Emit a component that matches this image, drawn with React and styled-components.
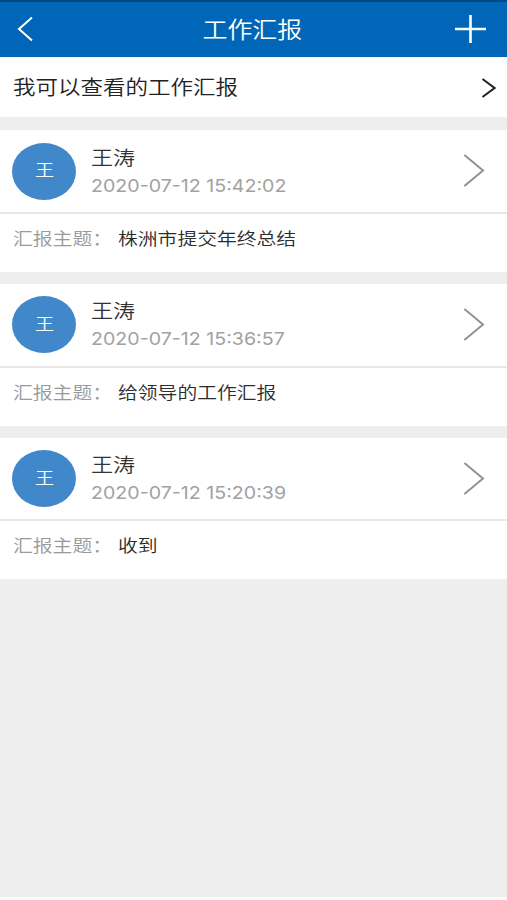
import styled, { createGlobalStyle } from "styled-components";

const GlobalStyle = createGlobalStyle`
    * {
        box-sizing: border-box;
    }

    body {
        margin: 0;
        background: #eeeeee;
        font-family: Inter, "Noto Sans CJK SC", sans-serif;
        font-weight: 350;
    }
`

const Page = styled.div`
    display: flex;
    flex-direction: column;
    height: 900px;
    overflow: hidden;
    background: #eeeeee;
    border-bottom: 3px solid #fafafa;
`

const Header = styled.header`
    display: grid;
    grid-template-columns: 60px 1fr 60px;
    align-items: center;
    flex-shrink: 0;
    height: 57.3px;
    padding: 0 21px 1px 17px;
    border-top: 2px solid #004884;
    background: #0166b7;
    color: #fff;
`

// glyphs run slightly wider than tall across the whole screen
const Text = styled.span`
    display: inline-block;
    flex-shrink: 0;
    font-size: ${props => props.$size}px;
    line-height: ${props => props.$line || 24}px;
    color: ${props => props.$color};
    white-space: nowrap;
    transform: scaleX(${props => props.$stretch || 1.125});
    transform-origin: ${props => props.$origin || "left"} center;
`

const Time = styled(Text)`
    font-weight: 400;
`

const Title = styled.h1`
    display: flex;
    justify-content: center;
    margin: 0;
    padding: 1px 0 0 2px;
    font-weight: 350;
`

const Icon = styled.svg`
    display: block;
    flex-shrink: 0;
    justify-self: ${props => props.$end ? "end" : "start"};
    fill: none;
    stroke: ${props => props.$color};
    stroke-width: ${props => props.$weight || 2};
`

const Entry = styled.div`
    display: flex;
    align-items: center;
    justify-content: space-between;
    flex-shrink: 0;
    height: 59.7px;
    padding: 1px 11px 0 12.5px;
    background: #fff;
`

const List = styled.div`
    display: flex;
    flex-direction: column;
    gap: 12.3px;
    margin-top: 13.3px;
`

const Card = styled.article`
    height: 141.5px;
    background: #fff;
`

const CardTop = styled.div`
    display: flex;
    align-items: center;
    height: 83.5px;
    padding: 0 22px 0 12px;
    border-bottom: 2px solid #e8e8e8;
`

const Avatar = styled.div`
    display: flex;
    align-items: center;
    justify-content: center;
    flex-shrink: 0;
    width: 64px;
    height: 57px;
    padding-bottom: 2px;
    border-radius: 50%;
    background: #4088c9;
`

const Info = styled.div`
    display: flex;
    flex-direction: column;
    align-items: flex-start;
    flex: 1;
    margin-left: 14.5px;
`

const Subject = styled.div`
    display: flex;
    align-items: center;
    height: 50px;
    padding-left: 12.5px;
`

const Label = styled.div`
    width: 105.5px;
`

const reports = [
    { name: "王涛", time: "2020-07-12 15:42:02", subject: "株洲市提交年终总结" },
    { name: "王涛", time: "2020-07-12 15:36:57", subject: "给领导的工作汇报" },
    { name: "王涛", time: "2020-07-12 15:20:39", subject: "收到" },
];

function Report({ report }) {
    return (
        <Card>
            <CardTop>
                <Avatar>
                    <Text $size={17} $color="#fff" $origin="center">{report.name[0]}</Text>
                </Avatar>
                <Info>
                    <Text $size={19.6} $line={28} $color="#333">{report.name}</Text>
                    <Time $size={17.8} $line={27} $color="#a2a2a2" $stretch={1.103}>{report.time}</Time>
                </Info>
                <Icon $color="#929292" width="22" height="34" viewBox="0 0 22 34" strokeLinecap="round">
                    <path d="M2 1.5L20 16.5L2 31.5" />
                </Icon>
            </CardTop>
            <Subject>
                <Label>
                    <Text $size={17.6} $color="#999">汇报主题：</Text>
                </Label>
                <Text $size={17.6} $color="#2c2c2c">{report.subject}</Text>
            </Subject>
        </Card>
    );
}

export default function App() {
    return (
        <Page>
            <GlobalStyle />
            <Header>
                <Icon $color="#fff" width="18" height="26" viewBox="0 0 18 26">
                    <path d="M15 1.5L2 13L15 24.5" />
                </Icon>
                <Title>
                    <Text $size={22.2} $line={30} $color="#fff" $origin="center">工作汇报</Text>
                </Title>
                <Icon $end $color="#fff" $weight={2.6} width="31" height="28" viewBox="0 0 31 28">
                    <path d="M0 14H31M15.5 0V28" />
                </Icon>
            </Header>
            <Entry>
                <Text $size={20} $color="#222">我可以查看的工作汇报</Text>
                <Icon $color="#222" width="15" height="20" viewBox="0 0 15 20">
                    <path d="M1.5 1L13.5 10L1.5 19" />
                </Icon>
            </Entry>
            <List>
                {reports.map((report) => (
                    <Report key={report.time} report={report} />
                ))}
            </List>
        </Page>
    );
}
